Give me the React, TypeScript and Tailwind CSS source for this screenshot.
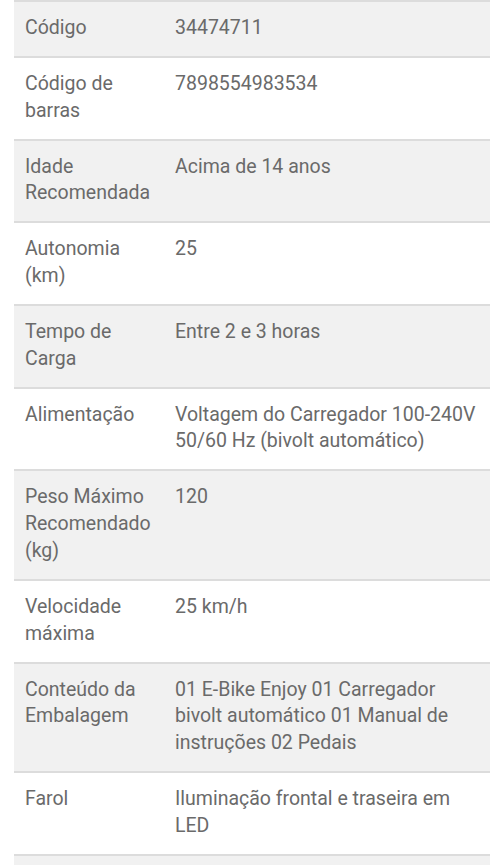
import React from "react";

const rows: [string, string][] = [
  ["Código", "34474711"],
  ["Código de barras", "7898554983534"],
  ["Idade Recomendada", "Acima de 14 anos"],
  ["Autonomia (km)", "25"],
  ["Tempo de Carga", "Entre 2 e 3 horas"],
  ["Alimentação", "Voltagem do Carregador 100-240V 50/60 Hz (bivolt automático)"],
  ["Peso Máximo Recomendado (kg)", "120"],
  ["Velocidade máxima", "25 km/h"],
  ["Conteúdo da Embalagem", "01 E-Bike Enjoy 01 Carregador bivolt automático 01 Manual de instruções 02 Pedais"],
  ["Farol", "Iluminação frontal e traseira em LED"],
  ["", ""],
];

export default function App() {
  return (
    <div className="w-[500px] h-[865px] overflow-hidden bg-white" style={{ fontFamily: "Roboto, 'Liberation Sans', sans-serif" }}>
      <div className="mx-[14px] w-[476px]">
        {rows.map(([k, v], i) => (
          <div
            key={i}
            className={`flex border-t-2 border-[#dcdcdc] pt-[13px] pb-[14.1px] text-[19.5px] leading-[26.8px] text-[#6a6a6a] ${i % 2 === 0 ? "bg-[#f1f1f1]" : "bg-white"}`}
          >
            <div className="w-[150px] shrink-0 pl-[11px] pr-[4px]">{k || "\u00a0"}</div>
            <div className="flex-1 pl-[11px] pr-[10px]">{v}</div>
          </div>
        ))}
      </div>
    </div>
  );
}
